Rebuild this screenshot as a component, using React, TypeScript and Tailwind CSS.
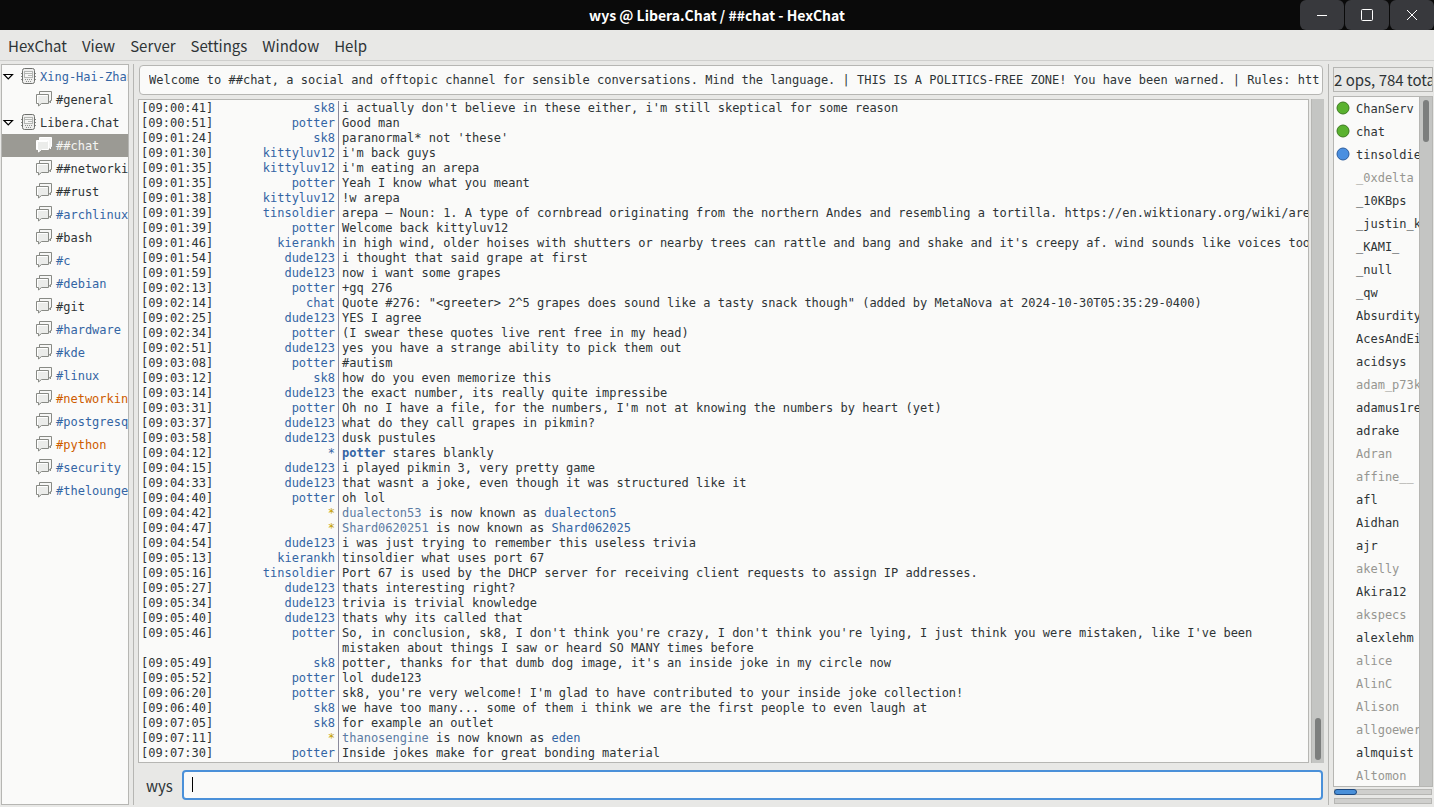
import { useState } from "react";

const treeRows = [
  { name: "Xing-Hai-Zhan", server: true, color: "text-[#3465a4]" },
  { name: "#general", color: "text-[#2e3436]" },
  { name: "Libera.Chat", server: true, color: "text-[#2e3436]" },
  { name: "##chat", selected: true, color: "text-[#f4f4f2]" },
  { name: "##networking", color: "text-[#2e3436]" },
  { name: "##rust", color: "text-[#2e3436]" },
  { name: "#archlinux", color: "text-[#3465a4]" },
  { name: "#bash", color: "text-[#2e3436]" },
  { name: "#c", color: "text-[#3465a4]" },
  { name: "#debian", color: "text-[#3465a4]" },
  { name: "#git", color: "text-[#2e3436]" },
  { name: "#hardware", color: "text-[#3465a4]" },
  { name: "#kde", color: "text-[#3465a4]" },
  { name: "#linux", color: "text-[#3465a4]" },
  { name: "#networking", color: "text-[#ce5c00]" },
  { name: "#postgresql", color: "text-[#3465a4]" },
  { name: "#python", color: "text-[#ce5c00]" },
  { name: "#security", color: "text-[#3465a4]" },
  { name: "#thelounge", color: "text-[#3465a4]" },
];

type Line = {
  time: string;
  nick: string;
  text?: string;
  action?: string;
  rename?: [string, string];
};

const lines: Line[] = [
  { time: "09:00:41", nick: "sk8", text: "i actually don't believe in these either, i'm still skeptical for some reason" },
  { time: "09:00:51", nick: "potter", text: "Good man" },
  { time: "09:01:24", nick: "sk8", text: "paranormal* not 'these'" },
  { time: "09:01:30", nick: "kittyluv12", text: "i'm back guys" },
  { time: "09:01:35", nick: "kittyluv12", text: "i'm eating an arepa" },
  { time: "09:01:35", nick: "potter", text: "Yeah I know what you meant" },
  { time: "09:01:38", nick: "kittyluv12", text: "!w arepa" },
  { time: "09:01:39", nick: "tinsoldier", text: "arepa — Noun: 1. A type of cornbread originating from the northern Andes and resembling a tortilla. https://en.wiktionary.org/wiki/arepa" },
  { time: "09:01:39", nick: "potter", text: "Welcome back kittyluv12" },
  { time: "09:01:46", nick: "kierankh", text: "in high wind, older hoises with shutters or nearby trees can rattle and bang and shake and it's creepy af. wind sounds like voices too" },
  { time: "09:01:54", nick: "dude123", text: "i thought that said grape at first" },
  { time: "09:01:59", nick: "dude123", text: "now i want some grapes" },
  { time: "09:02:13", nick: "potter", text: "+gq 276" },
  { time: "09:02:14", nick: "chat", text: 'Quote #276: "<greeter> 2^5 grapes does sound like a tasty snack though" (added by MetaNova at 2024-10-30T05:35:29-0400)' },
  { time: "09:02:25", nick: "dude123", text: "YES I agree" },
  { time: "09:02:34", nick: "potter", text: "(I swear these quotes live rent free in my head)" },
  { time: "09:02:51", nick: "dude123", text: "yes you have a strange ability to pick them out" },
  { time: "09:03:08", nick: "potter", text: "#autism" },
  { time: "09:03:12", nick: "sk8", text: "how do you even memorize this" },
  { time: "09:03:14", nick: "dude123", text: "the exact number, its really quite impressibe" },
  { time: "09:03:31", nick: "potter", text: "Oh no I have a file, for the numbers, I'm not at knowing the numbers by heart (yet)" },
  { time: "09:03:37", nick: "dude123", text: "what do they call grapes in pikmin?" },
  { time: "09:03:58", nick: "dude123", text: "dusk pustules" },
  { time: "09:04:12", nick: "*", action: "potter", text: "stares blankly" },
  { time: "09:04:15", nick: "dude123", text: "i played pikmin 3, very pretty game" },
  { time: "09:04:33", nick: "dude123", text: "that wasnt a joke, even though it was structured like it" },
  { time: "09:04:40", nick: "potter", text: "oh lol" },
  { time: "09:04:42", nick: "*", rename: ["dualecton53", "dualecton5"] },
  { time: "09:04:47", nick: "*", rename: ["Shard0620251", "Shard062025"] },
  { time: "09:04:54", nick: "dude123", text: "i was just trying to remember this useless trivia" },
  { time: "09:05:13", nick: "kierankh", text: "tinsoldier what uses port 67" },
  { time: "09:05:16", nick: "tinsoldier", text: "Port 67 is used by the DHCP server for receiving client requests to assign IP addresses." },
  { time: "09:05:27", nick: "dude123", text: "thats interesting right?" },
  { time: "09:05:34", nick: "dude123", text: "trivia is trivial knowledge" },
  { time: "09:05:40", nick: "dude123", text: "thats why its called that" },
  { time: "09:05:46", nick: "potter", text: "So, in conclusion, sk8, I don't think you're crazy, I don't think you're lying, I just think you were mistaken, like I've been\nmistaken about things I saw or heard SO MANY times before" },
  { time: "09:05:49", nick: "sk8", text: "potter, thanks for that dumb dog image, it's an inside joke in my circle now" },
  { time: "09:05:52", nick: "potter", text: "lol dude123" },
  { time: "09:06:20", nick: "potter", text: "sk8, you're very welcome! I'm glad to have contributed to your inside joke collection!" },
  { time: "09:06:40", nick: "sk8", text: "we have too many... some of them i think we are the first people to even laugh at" },
  { time: "09:07:05", nick: "sk8", text: "for example an outlet" },
  { time: "09:07:11", nick: "*", rename: ["thanosengine", "eden"] },
  { time: "09:07:30", nick: "potter", text: "Inside jokes make for great bonding material" },
];

const users = [
  { name: "ChanServ", dot: "green" },
  { name: "chat", dot: "green" },
  { name: "tinsoldier", dot: "blue" },
  { name: "_0xdelta", away: true },
  { name: "_10KBps" },
  { name: "_justin_kelly" },
  { name: "_KAMI_" },
  { name: "_null" },
  { name: "_qw" },
  { name: "Absurdity" },
  { name: "AcesAndEights" },
  { name: "acidsys" },
  { name: "adam_p73k", away: true },
  { name: "adamus1red" },
  { name: "adrake" },
  { name: "Adran", away: true },
  { name: "affine__", away: true },
  { name: "afl" },
  { name: "Aidhan" },
  { name: "ajr" },
  { name: "akelly", away: true },
  { name: "Akira12" },
  { name: "akspecs", away: true },
  { name: "alexlehm" },
  { name: "alice", away: true },
  { name: "AlinC", away: true },
  { name: "Alison", away: true },
  { name: "allgoewer", away: true },
  { name: "almquist" },
  { name: "Altomon", away: true },
];

const menus = ["HexChat", "View", "Server", "Settings", "Window", "Help"];

function ServerIcon() {
  return (
    <svg width="16" height="16" viewBox="0 0 16 16" className="mt-[3px] shrink-0 self-start" aria-hidden="true">
      <path d="M1 5.5h1M1 8.5h1M1 11.5h1M15 5.5h1M15 8.5h1M15 11.5h1" stroke="#8a8c8a" />
      <rect x="2.5" y="0.5" width="12" height="15" rx="2" fill="#eeeeed" stroke="#6e706d" />
      <rect x="4.5" y="3.5" width="8" height="6" fill="#f6f6f5" stroke="#b5b7b4" />
      <path d="M5 5.5h7M8 7.5h4" stroke="#b5b7b4" />
      <path d="M5 11.5h8M6 13.5h6" stroke="#8f918e" strokeDasharray="1 1" />
    </svg>
  );
}

function ChatIcon({ selected }: { selected?: boolean }) {
  const stroke = selected ? "#ffffff" : "#888a85";
  return (
    <svg width="16" height="16" viewBox="0 0 16 16" className="mt-[3px] shrink-0 self-start" aria-hidden="true">
      <path d="M3.5 0.5h12v9h-1v2.5l-2-2.5h-9z" fill="#f7f7f6" stroke={stroke} />
      <path d="M0.5 3.5h12v9h-7l-3 2.500v-2.500h-2z" fill="#ebecea" stroke={stroke} />
      <path d="M1.5 12V4.5h10" fill="none" stroke="#ffffff" />
    </svg>
  );
}

function Message({ line }: { line: Line }) {
  if (line.rename) {
    return (
      <>
        <span className="text-[#5b7ba3]">{line.rename[0]}</span> is now known as{" "}
        <span className="text-[#3465a4]">{line.rename[1]}</span>
      </>
    );
  }
  return (
    <>
      {line.action && <b className="text-[#3465a4]">{line.action} </b>}
      {line.text}
    </>
  );
}

export default function App() {
  const [draft, setDraft] = useState("");

  return (
    <div className="flex h-screen flex-col overflow-hidden bg-[#e8e8e6] font-['Noto_Sans_CJK_SC',sans-serif] text-[15px] text-[#2e3436]">
      <header className="grid h-[30px] shrink-0 grid-cols-[1fr_auto_1fr] items-center bg-[#0a0a0a]">
        <h1 className="col-start-2 text-[14px] leading-[30px] font-bold text-white">
          wys @ Libera.Chat / ##chat - HexChat
        </h1>
        <div className="flex justify-end gap-px text-white">
          <button aria-label="Minimize" className="flex h-[30px] w-11 items-center justify-center rounded-md bg-[#38393d]">
            <svg width="12" height="12" viewBox="0 0 12 12"><path d="M1 6.5h10" stroke="currentColor" /></svg>
          </button>
          <button aria-label="Maximize" className="flex h-[30px] w-11 items-center justify-center rounded-md bg-[#38393d]">
            <svg width="12" height="12" viewBox="0 0 12 12"><rect x="0.5" y="0.5" width="11" height="11" rx="1" fill="none" stroke="currentColor" /></svg>
          </button>
          <button aria-label="Close" className="flex h-[30px] w-11 items-center justify-center rounded-md bg-[#38393d]">
            <svg width="12" height="12" viewBox="0 0 12 12"><path d="M1 1l10 10M11 1L1 11" stroke="currentColor" /></svg>
          </button>
        </div>
      </header>

      <nav className="flex h-[31px] shrink-0 items-center gap-[15px] border-b border-[#cfcfcd] px-2 pt-[2px]">
        {menus.map((item) => (
          <button key={item}>{item}</button>
        ))}
      </nav>

      <div className="flex min-h-0 flex-1 pt-[3px] pb-[2px] pl-px">
        {/* channel tree */}
        <aside className="w-32 shrink-0 overflow-hidden border border-[#b6b6b3] bg-[#fafaf9] font-['DejaVu_Sans_Mono',monospace] text-[12px]">
          {treeRows.map((row) => (
            <button
              key={row.name}
              className={`flex h-[23px] w-full items-center gap-1 whitespace-nowrap ${row.color} ${row.selected ? "bg-[#9b9a94]" : ""} ${row.server ? "pl-px" : "pl-[34px]"}`}
            >
              {row.server && (
                <svg width="9" height="8" viewBox="0 0 9 8" className="mr-1 shrink-0 overflow-visible" aria-hidden="true">
                  <path d="M1 1.5h8.5L5.25 6z" fill="#fff" stroke="#000" strokeWidth="1.2" />
                </svg>
              )}
              {row.server ? <ServerIcon /> : <ChatIcon selected={row.selected} />}
              <span>{row.name}</span>
            </button>
          ))}
        </aside>

        <div className="ml-1 w-px shrink-0 bg-[#b6b6b3]" />

        <main className="ml-1 flex min-w-0 flex-1 flex-col pt-px">
          <input
            aria-label="Topic"
            readOnly
            value="Welcome to ##chat, a social and offtopic channel for sensible conversations. Mind the language. | THIS IS A POLITICS-FREE ZONE! You have been warned. | Rules: https://privatepaste.example/chat-rules"
            className="mr-[5px] ml-px h-[30px] rounded border border-[#b6b6b3] bg-[#fafaf9] pr-[2px] pl-[9px] font-['DejaVu_Sans_Mono',monospace] text-[12px] outline-none"
          />
          <div className="mt-1 flex min-h-0 flex-1 gap-[2px] pr-1">
            <ol className="flex min-w-0 flex-1 flex-col overflow-hidden border border-[#b6b6b3] bg-[#fafaf9] font-['DejaVu_Sans_Mono',monospace] text-[12px] leading-[15px]">
              {lines.map((line, i) => (
                <li key={i} className="flex first:pt-px last:flex-1">
                  <div className="flex w-[199px] shrink-0 justify-between pr-[3px] pl-[2px]">
                    <time>[{line.time}]</time>
                    <span className={line.rename ? "text-[#c4a000]" : "text-[#3465a4]"}>{line.nick}</span>
                  </div>
                  <p className="min-w-0 flex-1 border-l border-[#8a8a9c] pl-[3px] whitespace-pre">
                    <Message line={line} />
                  </p>
                </li>
              ))}
            </ol>
            <div className="flex w-[13px] shrink-0 flex-col justify-end border-l border-[#b6b6b3] bg-[#c4c5c3] pb-[3px] pl-[3px]">
              <div className="h-[42px] w-[6px] rounded-full bg-[#7c7e7d]" />
            </div>
          </div>
          <div className="mt-[7px] mr-[5px] mb-[5px] flex items-center">
            <label htmlFor="draft" className="w-11 pt-[2px] pl-2 leading-[28px]">wys</label>
            <div className="relative flex-1">
              <input
                id="draft"
                value={draft}
                onChange={(e) => setDraft(e.target.value)}
                className="h-[30px] w-full rounded border-2 border-[#4a90d9] bg-[#fafaf9] px-2 font-['DejaVu_Sans_Mono',monospace] text-[12px] caret-transparent outline-none"
              />
              {!draft && <span className="absolute top-[7px] left-[10px] h-[15px] w-px bg-black" />}
            </div>
          </div>
        </main>

        <div className="w-px shrink-0 bg-[#b6b6b3]" />

        <aside className="ml-1 flex w-[101px] shrink-0 flex-col pt-[3px] pr-px">
          <div className="h-[25px] overflow-hidden border border-[#b6b6b3] leading-[23px] whitespace-nowrap">
            2 ops, 784 total
          </div>
          <div className="mt-1 flex min-h-0 flex-1 border border-[#b6b6b3] bg-[#fafaf9]">
            <ul className="min-w-0 flex-1 overflow-hidden font-['DejaVu_Sans_Mono',monospace] text-[12px]">
              {users.map((user) => (
                <li key={user.name} className={`flex h-[23px] items-center gap-[6px] pl-[2px] whitespace-nowrap ${user.away ? "text-[#969691]" : ""}`}>
                  <span className="mt-1 w-[14px] shrink-0 self-start">
                    {user.dot && (
                      <svg width="14" height="14" viewBox="0 0 14 14" aria-hidden="true">
                        <circle
                          cx="7"
                          cy="7"
                          r="6"
                          fill={user.dot === "green" ? "#5ab22f" : "#4a8fe0"}
                          stroke={user.dot === "green" ? "#3c7a1f" : "#2b5c9e"}
                        />
                      </svg>
                    )}
                  </span>
                  <span>{user.name}</span>
                </li>
              ))}
            </ul>
            <div className="w-[13px] shrink-0 border-l border-[#b6b6b3] bg-[#c4c5c3] pt-[3px] pl-[3px]">
              <div className="h-[42px] w-[6px] rounded-full bg-[#7c7e7d]" />
            </div>
          </div>
          <div className="mx-px mt-[2px] h-[6px] border border-[#b6b6b3] bg-[#cfcfcd]">
            <div className="-mt-px -ml-px h-[6px] w-[23px] rounded-sm border border-[#1f4a80] bg-[#4a90d9]" />
          </div>
          <div className="mx-px mt-[3px] mb-px h-[6px] border border-[#b6b6b3] bg-[#cfcfcd]" />
        </aside>
      </div>
    </div>
  );
}
